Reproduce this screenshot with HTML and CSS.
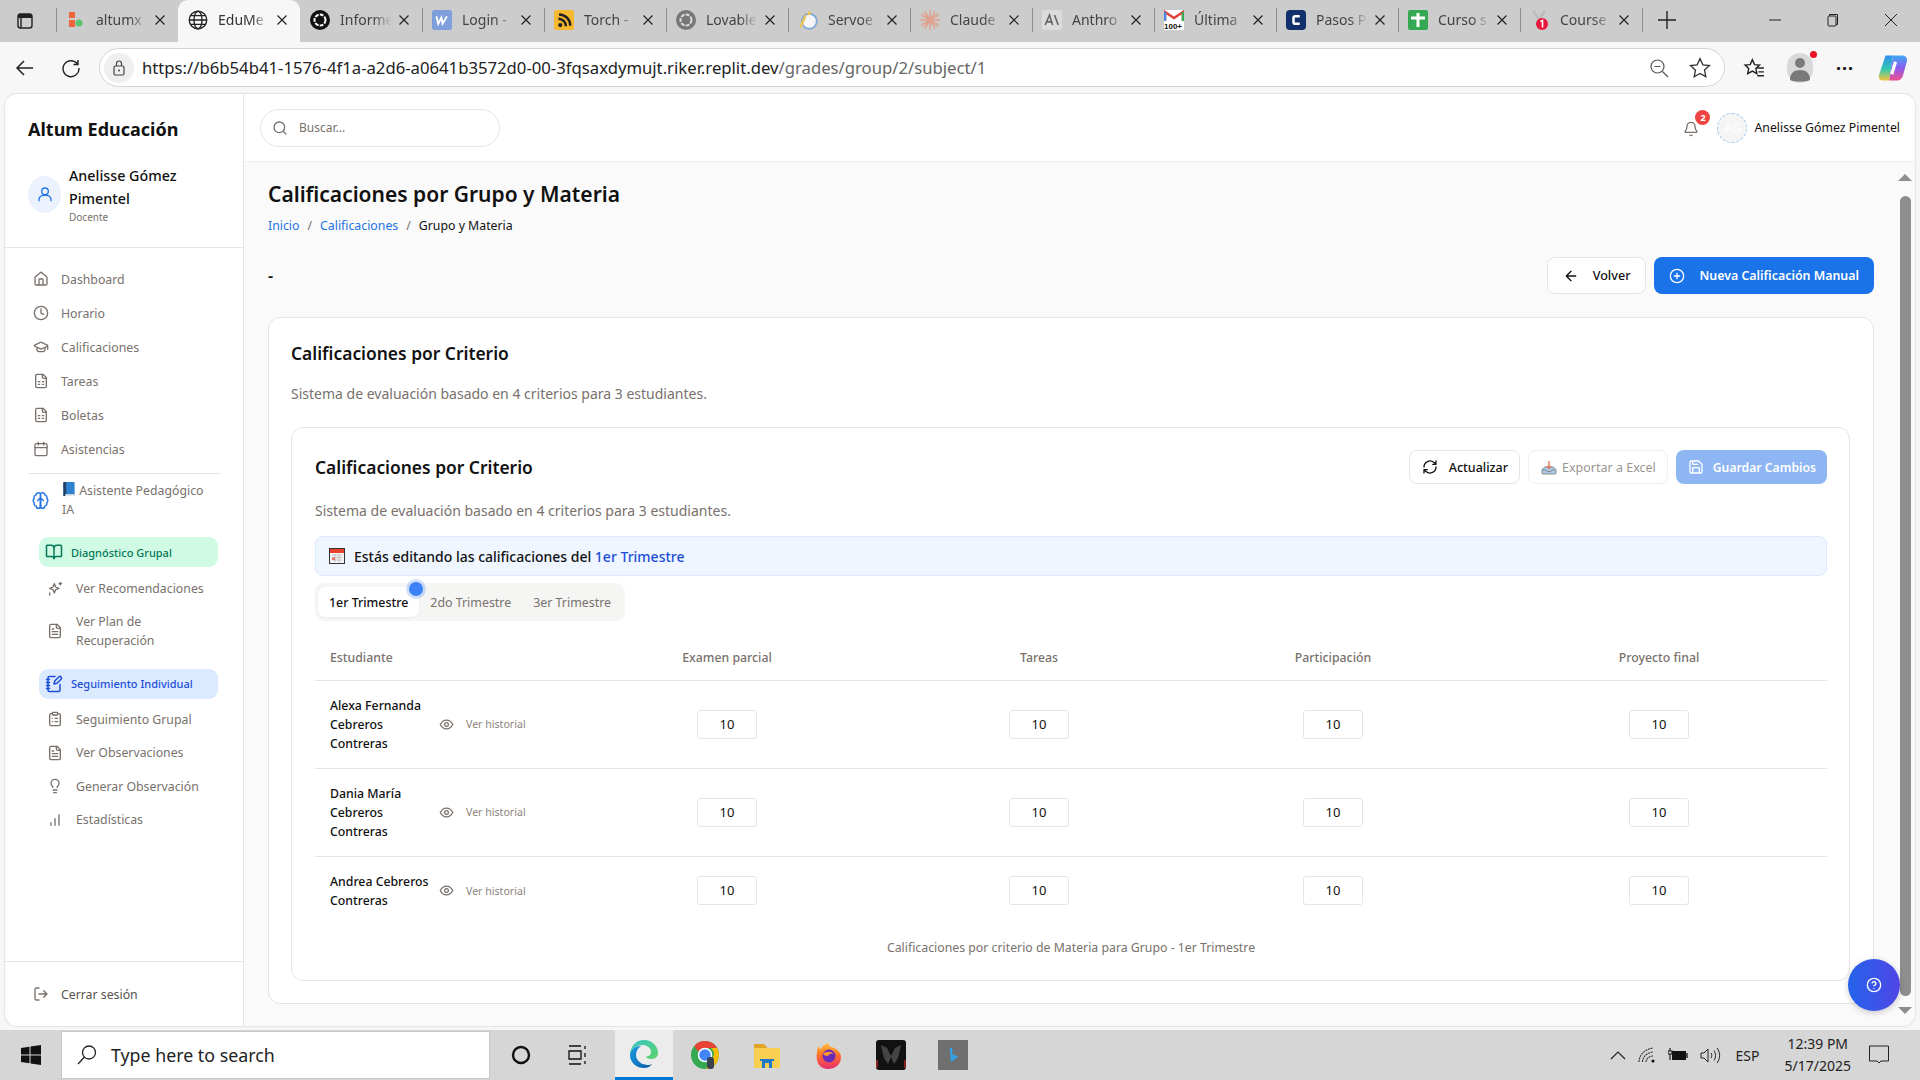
FILE: index.html
```html
<!DOCTYPE html>
<html lang="es">
<head>
    <meta charset="UTF-8">
    <title>Calificaciones por Grupo y Materia</title>
    <link rel="stylesheet" href="styles.css">
</head>
<body>
    <svg class="defs" width="0" height="0">
        <symbol id="i-close" viewBox="0 0 12 12"><path d="M1.5 1.5l9 9M10.5 1.5l-9 9" fill="none" stroke="currentColor" stroke-width="1.2"/></symbol>
        <symbol id="i-sheet" viewBox="0 0 24 24"><g fill="none" stroke="currentColor" stroke-width="2" stroke-linecap="round" stroke-linejoin="round"><path d="M15 2H6a2 2 0 0 0-2 2v16a2 2 0 0 0 2 2h12a2 2 0 0 0 2-2V7z"/><path d="M14 2v4a2 2 0 0 0 2 2h4"/><path d="M8 13h2M14 13h2M8 17h2M14 17h2"/></g></symbol>
        <symbol id="i-text" viewBox="0 0 24 24"><g fill="none" stroke="currentColor" stroke-width="2" stroke-linecap="round" stroke-linejoin="round"><path d="M15 2H6a2 2 0 0 0-2 2v16a2 2 0 0 0 2 2h12a2 2 0 0 0 2-2V7z"/><path d="M14 2v4a2 2 0 0 0 2 2h4"/><path d="M16 13H8M16 17H8M10 9H8"/></g></symbol>
        <symbol id="i-eye" viewBox="0 0 24 24"><g fill="none" stroke="currentColor" stroke-width="2" stroke-linecap="round" stroke-linejoin="round"><path d="M2 12s3.6-7 10-7 10 7 10 7-3.6 7-10 7-10-7-10-7z"/><circle cx="12" cy="12" r="3"/></g></symbol>
    </svg>

    <div class="tabstrip">
        <div class="tab-menu">
            <svg width="18" height="18" viewBox="0 0 18 18"><rect x="2" y="2" width="14" height="14" rx="2.5" fill="none" stroke="#222" stroke-width="1.4"/><rect x="2" y="2" width="14" height="4" fill="#222"/><path d="M5 6v10" stroke="#222" stroke-width="1.4"/></svg>
        </div>
        <div class="tab">
            <svg class="favicon" viewBox="0 0 20 20"><rect x="3" y="2" width="6" height="6" fill="#f0643c"/><rect x="3" y="10" width="6" height="7" fill="#f0643c"/><circle cx="13" cy="13" r="3.5" fill="#5cc46e"/></svg>
            <span class="tab-title">altumx</span>
            <svg class="tab-x"><use href="#i-close"/></svg>
        </div>
        <div class="tab active">
            <svg class="favicon" viewBox="0 0 16 16"><g fill="none" stroke="#222" stroke-width="1.1"><circle cx="8" cy="8" r="7"/><ellipse cx="8" cy="8" rx="3.2" ry="7"/><path d="M1 8h14M2 4.5h12M2 11.5h12"/></g></svg>
            <span class="tab-title">EduMe</span>
            <svg class="tab-x"><use href="#i-close"/></svg>
        </div>
        <div class="tab">
            <svg class="favicon" viewBox="0 0 16 16"><circle cx="8" cy="8" r="8" fill="#111"/><circle cx="8" cy="8" r="4.4" fill="none" stroke="#fff" stroke-width="1.6" stroke-dasharray="3 1"/></svg>
            <span class="tab-title">Informe</span>
            <svg class="tab-x"><use href="#i-close"/></svg>
        </div>
        <div class="tab">
            <svg class="favicon" viewBox="0 0 16 16"><rect width="16" height="16" rx="2" fill="#7f9fdc"/><path d="M3.5 5l1.5 6 2.5-5 1 5 3.5-6" fill="none" stroke="#fff" stroke-width="1.5"/></svg>
            <span class="tab-title">Login -</span>
            <svg class="tab-x"><use href="#i-close"/></svg>
        </div>
        <div class="tab">
            <svg class="favicon" viewBox="0 0 16 16"><rect width="16" height="16" rx="2" fill="#f5b82e"/><circle cx="5" cy="12" r="1.7" fill="#222"/><path d="M3.5 7a6 6 0 0 1 6 6M4 3.5a9 9 0 0 1 9 9" fill="none" stroke="#222" stroke-width="2"/></svg>
            <span class="tab-title">Torch -</span>
            <svg class="tab-x"><use href="#i-close"/></svg>
        </div>
        <div class="tab">
            <svg class="favicon" viewBox="0 0 16 16"><circle cx="8" cy="8" r="8" fill="#777"/><circle cx="8" cy="8" r="4.4" fill="none" stroke="#ddd" stroke-width="1.6" stroke-dasharray="3 1"/></svg>
            <span class="tab-title">Lovable</span>
            <svg class="tab-x"><use href="#i-close"/></svg>
        </div>
        <div class="tab">
            <svg class="favicon" viewBox="0 0 16 16"><circle cx="9" cy="9" r="6" fill="#f4f4f4" stroke="#7fa8d8" stroke-width="1.5"/><path d="M2 14L6 4" stroke="#e6c25a" stroke-width="2"/><circle cx="9" cy="2.5" r="1.5" fill="#e6c25a"/></svg>
            <span class="tab-title">Servoe</span>
            <svg class="tab-x"><use href="#i-close"/></svg>
        </div>
        <div class="tab">
            <svg class="favicon" viewBox="0 0 16 16"><path d="M8 0v16M0 8h16M2.3 2.3l11.4 11.4M13.7 2.3L2.3 13.7M4 .8l8 14.4M12 .8L4 15.2M.8 4l14.4 8M.8 12l14.4-8" stroke="#e0a18c" stroke-width="1.1"/></svg>
            <span class="tab-title">Claude</span>
            <svg class="tab-x"><use href="#i-close"/></svg>
        </div>
        <div class="tab">
            <svg class="favicon" viewBox="0 0 16 16"><rect width="16" height="16" rx="2" fill="#dcdcdc"/><path d="M2.5 12L6 4l2.5 8M4 9.5h3.5M10 4l3 8" fill="none" stroke="#666" stroke-width="1.3"/></svg>
            <span class="tab-title">Anthro</span>
            <svg class="tab-x"><use href="#i-close"/></svg>
        </div>
        <div class="tab">
            <svg class="favicon" viewBox="0 0 20 20"><rect width="20" height="20" fill="#fff"/><path d="M1 11V2l9 6 9-6v9" fill="none" stroke="#e0433a" stroke-width="2.5"/><path d="M1 2v9" stroke="#4a87e8" stroke-width="2.5"/><path d="M19 2v9" stroke="#35a853" stroke-width="2.5"/><text x="0" y="19" class="gmail-count">100+</text></svg>
            <span class="tab-title">Última</span>
            <svg class="tab-x"><use href="#i-close"/></svg>
        </div>
        <div class="tab">
            <svg class="favicon" viewBox="0 0 16 16"><rect width="16" height="16" rx="3" fill="#12306b"/><path d="M11 5H7.5A1.5 1.5 0 0 0 6 6.5v3A1.5 1.5 0 0 0 7.5 11H11" fill="none" stroke="#fff" stroke-width="2"/></svg>
            <span class="tab-title">Pasos P</span>
            <svg class="tab-x"><use href="#i-close"/></svg>
        </div>
        <div class="tab">
            <svg class="favicon" viewBox="0 0 20 20"><rect width="20" height="20" rx="2" fill="#34a853"/><path d="M10 3v14M3 8h14" stroke="#fff" stroke-width="3"/></svg>
            <span class="tab-title">Curso s</span>
            <svg class="tab-x"><use href="#i-close"/></svg>
        </div>
        <div class="tab">
            <svg class="favicon" viewBox="0 0 20 20"><path d="M3 1l8 11M15 1L8 11" stroke="#bbb" stroke-width="2.5"/><circle cx="12" cy="14" r="6" fill="#e8173c"/><path d="M10.5 11.5l2-1v7" fill="none" stroke="#fff" stroke-width="1.6"/></svg>
            <span class="tab-title">Course</span>
            <svg class="tab-x"><use href="#i-close"/></svg>
        </div>
        <div class="tab-new">
            <svg width="18" height="18" viewBox="0 0 18 18"><path d="M9 0v18M0 9h18" stroke="#222" stroke-width="1.4"/></svg>
        </div>
        <div class="win-controls">
            <span class="win-btn"><svg width="14" height="14" viewBox="0 0 14 14"><path d="M1 7h12" stroke="#222"/></svg></span>
            <span class="win-btn"><svg width="14" height="14" viewBox="0 0 14 14"><path d="M3.5 3V1.5h8v10H10" fill="none" stroke="#222"/><rect x="2" y="3" width="8" height="10" rx="1" fill="none" stroke="#222"/></svg></span>
            <span class="win-btn"><svg width="14" height="14" viewBox="0 0 14 14"><path d="M1 1l12 12M13 1L1 13" stroke="#222"/></svg></span>
        </div>
    </div>

    <div class="toolbar">
        <svg class="tool-icon" viewBox="0 0 20 20"><path d="M18 10H2.5M9 3l-7 7 7 7" fill="none" stroke="#222" stroke-width="1.5"/></svg>
        <svg class="tool-icon" viewBox="0 0 20 20"><path d="M16.5 6A8 8 0 1 0 18 10M17 2v4.5h-4.5" fill="none" stroke="#222" stroke-width="1.4"/></svg>
        <div class="omnibox">
            <span class="lock"><svg width="14" height="16" viewBox="0 0 14 16"><rect x="2" y="6" width="10" height="9" rx="1.5" fill="none" stroke="#444" stroke-width="1.2"/><path d="M4.5 6V3.5a2.5 2.5 0 0 1 5 0V6" fill="none" stroke="#444" stroke-width="1.2"/><circle cx="7" cy="10.5" r="1" fill="#444"/></svg></span>
            <span class="url"><b>https://b6b54b41-1576-4f1a-a2d6-a0641b3572d0-00-3fqsaxdymujt.riker.replit.dev</b>/grades/group/2/subject/1</span>
            <svg class="omni-icon" viewBox="0 0 20 20"><circle cx="8.5" cy="8.5" r="6.5" fill="none" stroke="#555" stroke-width="1.2"/><path d="M13.5 13.5L19 19M5.5 8.5h6" stroke="#555" stroke-width="1.2"/></svg>
            <svg class="omni-icon star" viewBox="0 0 20 20"><path d="M10 1.5l2.6 5.6 6 .7-4.5 4.1 1.2 6L10 15l-5.3 3 1.2-6L1.4 7.800l6-.7z" fill="none" stroke="#333" stroke-width="1.2"/></svg>
        </div>
        <svg class="tool-icon favs" viewBox="0 0 20 20"><path d="M8.5 2.5l2 4.4 4.5.5-3.3 3.1.9 4.7-4.1-2.3-4.2 2.3.9-4.7L1.900 7.400l4.600-.5zM13 10h6M14 13.5h5M13 17h6" fill="none" stroke="#222" stroke-width="1.3"/></svg>
        <div class="profile-pic">
            <svg width="26" height="30" viewBox="0 0 26 30"><rect width="26" height="30" rx="13" fill="#d9d9d9"/><circle cx="13" cy="10" r="5" fill="#7a7a7a"/><path d="M3 27c0-7 4-10 10-10s10 3 10 10c-3 2-17 2-20 0z" fill="#7a7a7a"/></svg>
            <i class="profile-dot"></i>
        </div>
        <span class="more">···</span>
        <svg class="copilot" viewBox="0 0 24 24"><defs><linearGradient id="cp1" x1="0" y1="0" x2="0" y2="1"><stop offset="0" stop-color="#2f8ff0"/><stop offset=".55" stop-color="#35c9b0"/><stop offset="1" stop-color="#f5c53a"/></linearGradient><linearGradient id="cp2" x1="0" y1="0" x2="0" y2="1"><stop offset="0" stop-color="#3fa7f5"/><stop offset=".5" stop-color="#8a5cf0"/><stop offset="1" stop-color="#ef4f8a"/></linearGradient></defs><path d="M6 2h6L9 22H4c-3 0-4-2-3-5z" fill="url(#cp1)"/><path d="M12 2h7c3 0 5 2 4 5l-3 11c-1 3-3 4-5 4H9z" fill="url(#cp2)"/><path d="M14 7l-3 10" stroke="#fff" stroke-width="2.5"/></svg>
    </div>

    <div class="window">
        <aside class="sidebar">
            <div class="brand">Altum Educación</div>
            <div class="user-box">
                <div class="user-avatar">
                    <svg width="16" height="16" viewBox="0 0 24 24"><g fill="none" stroke="#2474e5" stroke-width="2" stroke-linecap="round"><circle cx="12" cy="8" r="5"/><path d="M3 22v-2a7 7 0 0 1 7-6h4a7 7 0 0 1 7 6v2"/></g></svg>
                </div>
                <div>
                    <div class="user-name">Anelisse Gómez Pimentel</div>
                    <div class="user-role">Docente</div>
                </div>
            </div>

            <nav class="nav">
                <a class="nav-item"><svg class="nav-icon" viewBox="0 0 24 24"><g fill="none" stroke="currentColor" stroke-width="2" stroke-linejoin="round"><path d="M3 10a2 2 0 0 1 .7-1.5l7-6a2 2 0 0 1 2.6 0l7 6A2 2 0 0 1 21 10v9a2 2 0 0 1-2 2H5a2 2 0 0 1-2-2z"/><path d="M15 21v-8a1 1 0 0 0-1-1h-4a1 1 0 0 0-1 1v8"/></g></svg>Dashboard</a>
                <a class="nav-item"><svg class="nav-icon" viewBox="0 0 24 24"><g fill="none" stroke="currentColor" stroke-width="2" stroke-linecap="round"><circle cx="12" cy="12" r="10"/><path d="M12 6v6l4 2"/></g></svg>Horario</a>
                <a class="nav-item"><svg class="nav-icon" viewBox="0 0 24 24"><g fill="none" stroke="currentColor" stroke-width="2" stroke-linejoin="round"><path d="M21.4 10.9a1 1 0 0 0 0-1.8L12.8 5.2a2 2 0 0 0-1.7 0L2.6 9.100a1 1 0 0 0 0 1.800l8.600 3.900a2 2 0 0 0 1.700 0z"/><path d="M22 10v6M6 12.5V16a6 3 0 0 0 12 0v-3.500"/></g></svg>Calificaciones</a>
                <a class="nav-item"><svg class="nav-icon"><use href="#i-sheet"/></svg>Tareas</a>
                <a class="nav-item"><svg class="nav-icon"><use href="#i-sheet"/></svg>Boletas</a>
                <a class="nav-item"><svg class="nav-icon" viewBox="0 0 24 24"><g fill="none" stroke="currentColor" stroke-width="2" stroke-linecap="round"><rect x="3" y="4" width="18" height="18" rx="2"/><path d="M16 2v4M8 2v4M3 10h18"/></g></svg>Asistencias</a>
            </nav>

            <div class="ai-section">
                <div class="ai-head">
                    <svg class="ai-brain" viewBox="0 0 24 24"><g fill="none" stroke="#2474e5" stroke-width="2" stroke-linecap="round"><path d="M12 4a3 3 0 0 0-6 0 4 4 0 0 0-3 5 4 4 0 0 0 0 6 4 4 0 0 0 3 5 3 3 0 0 0 6 0z"/><path d="M12 4a3 3 0 0 1 6 0 4 4 0 0 1 3 5 4 4 0 0 1 0 6 4 4 0 0 1-3 5 3 3 0 0 1-6 0z"/><path d="M12 8v14M8 12l4-4 4 4"/></g></svg>
                    <span class="ai-title"><svg class="book-emoji" viewBox="0 0 14 16"><rect x="1" y="0" width="12" height="15" rx="1.5" fill="#2f82cf"/><rect x="1" y="0" width="3" height="15" fill="#1f3f63"/><rect x="3" y="13" width="10" height="2" fill="#e6e6e6"/></svg> Asistente Pedagógico IA</span>
                </div>

                <a class="pill pill-green"><svg class="pill-icon" viewBox="0 0 24 24"><g fill="none" stroke="currentColor" stroke-width="2" stroke-linejoin="round"><path d="M12 7v14"/><path d="M3 18a1 1 0 0 1-1-1V4a1 1 0 0 1 1-1h5a4 4 0 0 1 4 4 4 4 0 0 1 4-4h5a1 1 0 0 1 1 1v13a1 1 0 0 1-1 1h-6a3 3 0 0 0-3 3 3 3 0 0 0-3-3z"/></g></svg>Diagnóstico Grupal</a>
                <a class="sub-item"><svg class="nav-icon" viewBox="0 0 24 24"><g fill="none" stroke="currentColor" stroke-width="2" stroke-linejoin="round" stroke-linecap="round"><path d="M11 4l2 5 5 2-5 2-2 5-2-5-5-2 5-2z"/><path d="M20 2v4M22 4h-4M4 18v3"/></g></svg>Ver Recomendaciones</a>
                <a class="sub-item sub-tall"><svg class="nav-icon"><use href="#i-text"/></svg><span>Ver Plan de Recuperación</span></a>
                <a class="pill pill-blue"><svg class="pill-icon" viewBox="0 0 24 24"><g fill="none" stroke="currentColor" stroke-width="2" stroke-linecap="round" stroke-linejoin="round"><path d="M13.4 2H6a2 2 0 0 0-2 2v16a2 2 0 0 0 2 2h12a2 2 0 0 0 2-2v-7.4"/><path d="M2 6h4M2 10h4M2 14h4M2 18h4"/><path d="M21.4 5.6a2 2 0 0 0-3-3L13 8l-1 4 4-1z"/></g></svg>Seguimiento Individual</a>
                <a class="sub-item"><svg class="nav-icon" viewBox="0 0 24 24"><g fill="none" stroke="currentColor" stroke-width="2" stroke-linecap="round"><rect x="8" y="2" width="8" height="4" rx="1"/><path d="M16 4h2a2 2 0 0 1 2 2v14a2 2 0 0 1-2 2H6a2 2 0 0 1-2-2V6a2 2 0 0 1 2-2h2"/><path d="M12 11h4M12 16h4M8 11h.01M8 16h.01"/></g></svg>Seguimiento Grupal</a>
                <a class="sub-item"><svg class="nav-icon"><use href="#i-text"/></svg>Ver Observaciones</a>
                <a class="sub-item"><svg class="nav-icon" viewBox="0 0 24 24"><g fill="none" stroke="currentColor" stroke-width="2" stroke-linecap="round"><path d="M15 14c.2-1 .7-1.7 1.5-2.500A4.600 4.600 0 0 0 18 8 6 6 0 0 0 6 8c0 1 .2 2.200 1.500 3.500.7.700 1.300 1.500 1.500 2.500"/><path d="M9 18h6M10 22h4"/></g></svg>Generar Observación</a>
                <a class="sub-item"><svg class="nav-icon" viewBox="0 0 24 24"><path d="M6 20v-4M12 20V10M18 20V4" fill="none" stroke="currentColor" stroke-width="2" stroke-linecap="round"/></svg>Estadísticas</a>
            </div>

            <a class="logout"><svg class="nav-icon" viewBox="0 0 24 24"><g fill="none" stroke="currentColor" stroke-width="2" stroke-linecap="round" stroke-linejoin="round"><path d="M9 21H5a2 2 0 0 1-2-2V5a2 2 0 0 1 2-2h4"/><path d="M16 17l5-5-5-5M21 12H9"/></g></svg>Cerrar sesión</a>
        </aside>

        <div class="main">
            <header class="topbar">
                <div class="search">
                    <svg width="16" height="16" viewBox="0 0 24 24"><g fill="none" stroke="#78716c" stroke-width="2" stroke-linecap="round"><circle cx="11" cy="11" r="8"/><path d="M21 21l-4.3-4.3"/></g></svg>
                    <span>Buscar...</span>
                </div>
                <div class="top-right">
                    <div class="bell">
                        <svg width="16" height="16" viewBox="0 0 24 24"><g fill="none" stroke="#78716c" stroke-width="2" stroke-linecap="round" stroke-linejoin="round"><path d="M10.3 21a2 2 0 0 0 3.4 0"/><path d="M3.3 15.3A1 1 0 0 0 4 17h16a1 1 0 0 0 .7-1.700C19.400 14 18 12.500 18 8A6 6 0 0 0 6 8c0 4.500-1.400 6-2.700 7.300"/></g></svg>
                        <span class="badge">2</span>
                    </div>
                    <div class="top-avatar">AG</div>
                    <span class="top-name">Anelisse Gómez Pimentel</span>
                </div>
            </header>

            <div class="scroll-area">
                <div class="content">
                    <h1>Calificaciones por Grupo y Materia</h1>
                    <div class="crumbs"><a>Inicio</a><i>/</i><a>Calificaciones</a><i>/</i><span>Grupo y Materia</span></div>

                    <div class="page-actions">
                        <span class="dash">-</span>
                        <div class="btn-group">
                            <button class="btn btn-light btn-volver"><svg width="16" height="16" viewBox="0 0 24 24"><path d="M19 12H5M12 19l-7-7 7-7" fill="none" stroke="#111" stroke-width="2" stroke-linecap="round" stroke-linejoin="round"/></svg>Volver</button>
                            <button class="btn btn-primary"><svg width="16" height="16" viewBox="0 0 24 24"><g fill="none" stroke="#fff" stroke-width="2" stroke-linecap="round"><circle cx="12" cy="12" r="10"/><path d="M8 12h8M12 8v8"/></g></svg>Nueva Calificación Manual</button>
                        </div>
                    </div>

                    <section class="card outer-card">
                        <h2>Calificaciones por Criterio</h2>
                        <p class="muted outer-sub">Sistema de evaluación basado en 4 criterios para 3 estudiantes.</p>

                        <section class="card inner-card">
                            <div class="inner-head">
                                <h2>Calificaciones por Criterio</h2>
                                <div class="inner-actions">
                                    <button class="btn-sm btn-refresh"><svg width="16" height="16" viewBox="0 0 24 24"><g fill="none" stroke="#111" stroke-width="2" stroke-linecap="round" stroke-linejoin="round"><path d="M3 12a9 9 0 0 1 15-6.700L21 8M21 3v5h-5M21 12a9 9 0 0 1-15 6.700L3 16M8 16H3v5"/></g></svg>Actualizar</button>
                                    <button class="btn-sm btn-export"><svg width="16" height="16" viewBox="0 0 16 16"><path d="M1 10.5L4 8h8l3 2.5V14a1 1 0 0 1-1 1H2a1 1 0 0 1-1-1z" fill="#a9cbe8" stroke="#8b8b8b"/><path d="M1.5 11h3.5l1 1.5h4l1-1.5h3.5" fill="none" stroke="#8b8b8b"/><path d="M8 2v7M6 7l2 2.5L10 7" fill="none" stroke="#e27a62" stroke-width="1.4"/></svg>Exportar a Excel</button>
                                    <button class="btn-sm btn-save"><svg width="16" height="16" viewBox="0 0 24 24"><g fill="none" stroke="#fff" stroke-width="2" stroke-linejoin="round"><path d="M15.2 3a2 2 0 0 1 1.4.6l3.8 3.800a2 2 0 0 1 .6 1.400V19a2 2 0 0 1-2 2H5a2 2 0 0 1-2-2V5a2 2 0 0 1 2-2z"/><path d="M17 21v-7a1 1 0 0 0-1-1H8a1 1 0 0 0-1 1v7M7 3v4a1 1 0 0 0 1 1h7"/></g></svg>Guardar Cambios</button>
                                </div>
                            </div>
                            <p class="muted inner-sub">Sistema de evaluación basado en 4 criterios para 3 estudiantes.</p>

                            <div class="notice">
                                <svg width="16" height="16" viewBox="0 0 16 16"><rect x=".5" y=".5" width="15" height="15" fill="#f4f4f4" stroke="#333"/><rect x="1" y="1" width="14" height="4" fill="#e8412c"/><path d="M3 7h10M3 9.5h10M3 12h10M6 6v8M10 6v8" stroke="#bbb" stroke-width=".8"/><rect x="3" y="9.5" width="3" height="2.5" fill="#e8776a"/></svg>
                                <span>Estás editando las calificaciones del <em>1er Trimestre</em></span>
                            </div>

                            <div class="term-tabs">
                                <span class="term active">1er Trimestre<i class="term-dot"></i></span>
                                <span class="term">2do Trimestre</span>
                                <span class="term">3er Trimestre</span>
                            </div>

                            <table class="grades">
                                <colgroup><col class="c-student"><col class="c-exam"><col class="c-tasks"><col class="c-part"><col class="c-final"></colgroup>
                                <thead>
                                    <tr><th class="th-student">Estudiante</th><th>Examen parcial</th><th>Tareas</th><th>Participación</th><th>Proyecto final</th></tr>
                                </thead>
                                <tbody>
                                    <tr>
                                        <td><div class="student"><span class="student-name">Alexa Fernanda Cebreros Contreras</span><span class="history"><svg class="eye"><use href="#i-eye"/></svg>Ver historial</span></div></td>
                                        <td><span class="score">10</span></td><td><span class="score">10</span></td><td><span class="score">10</span></td><td><span class="score">10</span></td>
                                    </tr>
                                    <tr>
                                        <td><div class="student"><span class="student-name">Dania María Cebreros Contreras</span><span class="history"><svg class="eye"><use href="#i-eye"/></svg>Ver historial</span></div></td>
                                        <td><span class="score">10</span></td><td><span class="score">10</span></td><td><span class="score">10</span></td><td><span class="score">10</span></td>
                                    </tr>
                                    <tr>
                                        <td><div class="student"><span class="student-name">Andrea Cebreros Contreras</span><span class="history"><svg class="eye"><use href="#i-eye"/></svg>Ver historial</span></div></td>
                                        <td><span class="score">10</span></td><td><span class="score">10</span></td><td><span class="score">10</span></td><td><span class="score">10</span></td>
                                    </tr>
                                </tbody>
                            </table>
                            <p class="table-note">Calificaciones por criterio de Materia para Grupo - 1er Trimestre</p>
                        </section>
                    </section>
                </div>
                <div class="scrollbar">
                    <i class="arrow-up"></i>
                    <i class="thumb"></i>
                    <i class="arrow-down"></i>
                </div>
                <button class="fab"><svg width="16" height="16" viewBox="0 0 24 24"><g fill="none" stroke="#fff" stroke-width="2" stroke-linecap="round"><circle cx="12" cy="12" r="10"/><path d="M9.1 9a3 3 0 0 1 5.8 1c0 2-3 3-3 3M12 17h.01"/></g></svg></button>
            </div>
        </div>
    </div>

    <div class="taskbar">
        <span class="start"><svg width="20" height="20" viewBox="0 0 20 20"><path d="M0 3l8.5-1.200v7.700H0zM9.500 1.600L20 0v9.500H9.500zM0 10.500h8.500v7.700L0 17zM9.500 10.500H20V20L9.500 18.400z" fill="#111"/></svg></span>
        <div class="task-search">
            <svg width="20" height="20" viewBox="0 0 20 20"><g fill="none" stroke="#222" stroke-width="1.3"><circle cx="12" cy="7.5" r="6.5"/><path d="M7.5 12L1 19"/></g></svg>
            <span>Type here to search</span>
        </div>
        <span class="task-btn"><svg width="20" height="20" viewBox="0 0 20 20"><circle cx="10" cy="10" r="8" fill="none" stroke="#111" stroke-width="2.4"/></svg></span>
        <span class="task-btn task-view"><svg width="20" height="20" viewBox="0 0 20 20"><path d="M1 1h12M1 19h12M1 6h12v8H1zM17 1v3M17 8v4M17 16v3" fill="none" stroke="#111" stroke-width="1.3"/></svg></span>
        <span class="task-btn edge-tile">
            <svg width="30" height="30" viewBox="0 0 30 30"><defs><linearGradient id="eg1" x1="0" y1="0" x2="1" y2="1"><stop offset="0" stop-color="#36c4c4"/><stop offset="1" stop-color="#5fd36a"/></linearGradient><linearGradient id="eg2" x1="0" y1="0" x2="1" y2="1"><stop offset="0" stop-color="#1b9de2"/><stop offset="1" stop-color="#0c5aa8"/></linearGradient></defs><path d="M15 1c8 0 14 6 14 13 0 4-3 6-7 6-3 0-5-1-5-2.5 3 0 5-2 5-4.500 0-4-4-7-8-7-5 0-11 3-13 9C2 7 7 1 15 1z" fill="url(#eg1)"/><path d="M1 15c1-5 6-8 11-8-3 2-5 5-5 9 0 6 6 10 12 10 2 0 3-.5 4-1-2 3-5 4-8 4C7 29 .5 23 1 15z" fill="url(#eg2)"/></svg>
        </span>
        <span class="task-btn"><svg width="30" height="30" viewBox="0 0 30 30"><circle cx="15" cy="15" r="14" fill="#34a853"/><path d="M15 1a14 14 0 0 1 12.1 7H15a7 7 0 0 0-6.4 4L4.2 5.900A14 14 0 0 1 15 1z" fill="#ea4335"/><path d="M27.1 8A14 14 0 0 1 16 29l6-10.500A7 7 0 0 0 21 8z" fill="#fbbc05"/><circle cx="15" cy="15" r="6.5" fill="#4285f4" stroke="#fff" stroke-width="1.5"/><rect x="17" y="17" width="7" height="12" rx="3" fill="#39424e"/></svg></span>
        <span class="task-btn"><svg width="30" height="30" viewBox="0 0 30 30"><path d="M2 4h10l3 3v6H2z" fill="#e0a528"/><rect x="2" y="8" width="26" height="20" fill="#f9cf52"/><path d="M10 28v-9h10v9h-3v-5h-4v5z" fill="#1d79c8"/><path d="M8 19h14v2H8z" fill="#1d79c8"/></svg></span>
        <span class="task-btn"><svg width="30" height="30" viewBox="0 0 30 30"><defs><linearGradient id="ff" x1="0" y1="0" x2="0" y2="1"><stop offset="0" stop-color="#ffc12e"/><stop offset=".5" stop-color="#ff6a2e"/><stop offset="1" stop-color="#e62e6f"/></linearGradient></defs><path d="M3 12c0-3 1-5 2-6 0 2 1 3 2 3 1-3 4-5 8-6-1 2 0 3 2 4 5 1 10 5 10 10 0 8-6 12-13 12S1 24 3 12z" fill="url(#ff)"/><circle cx="15" cy="16" r="6.5" fill="#6a2bb8"/><path d="M9 14c3-3 8-3 11 0-3-1-5 0-6 2-2 0-4-1-5-2z" fill="#ff9a2e"/></svg></span>
        <span class="task-btn"><svg width="30" height="30" viewBox="0 0 30 30"><rect width="30" height="30" rx="3" fill="#111"/><path d="M5 5l6 3 4 8 4-8 6-3-3 13-4 6-3-7-3 7-4-6z" fill="#444"/><path d="M1 20v8M29 20v8" stroke="#b02525" stroke-width="1.5"/></svg></span>
        <span class="task-btn"><svg width="30" height="30" viewBox="0 0 30 30"><rect width="30" height="30" fill="#6f6f6f"/><path d="M13 8l1 12 4-3-3-1.5" fill="none" stroke="#2ea4f0" stroke-width="2.2"/></svg></span>

        <div class="tray">
            <svg class="tray-chev" width="16" height="10" viewBox="0 0 16 10"><path d="M1 9l7-7 7 7" fill="none" stroke="#222" stroke-width="1.2"/></svg>
            <svg width="18" height="16" viewBox="0 0 18 16"><g fill="none" stroke="#333" stroke-width="1.1" stroke-dasharray="2 .7"><path d="M1 15C1 8 7 2 15 1M4.500 15c0-5 4-9 10.500-10M8 15c0-3 3-6 7-6"/></g><circle cx="15" cy="14" r="1.600" fill="#111"/></svg>
            <svg width="20" height="14" viewBox="0 0 20 14"><rect x="4" y="3" width="14" height="9" fill="#111"/><path d="M19 5v5" stroke="#111" stroke-width="1.3"/><path d="M2 0v3M0 3h4v3H0zM2 6v6" fill="none" stroke="#111" stroke-width="1.1"/></svg>
            <svg width="21" height="17" viewBox="0 0 21 17"><g fill="none" stroke="#222" stroke-width="1"><path d="M1 6h3l4-4v13l-4-4H1zM11 6c1 1.500 1 3.500 0 5M14 3.500c2 3 2 7 0 10M17 1c3.500 4.500 3.500 10.500 0 15"/></g></svg>
            <span class="tray-lang">ESP</span>
            <div class="clock"><div>12:39 PM</div><div>5/17/2025</div></div>
            <svg class="tray-notif" width="20" height="20" viewBox="0 0 20 20"><path d="M.5 1h19v15h-7.500L10 18l-2-2H.5z" fill="none" stroke="#222"/></svg>
        </div>
    </div>
</body>
</html>
```

FILE: styles.css
```css
* {
    box-sizing: border-box;
}
html, body {
    margin: 0;
    height: 100%;
}
body {
    width: 1920px;
    height: 1080px;
    overflow: hidden;
    display: flex;
    flex-direction: column;
    background: #f7f7f7;
    font-family: "Noto Sans", sans-serif;
    color: #111;
}
.defs {
    position: absolute;
}
h1, h2, p {
    margin: 0;
}
button {
    font-family: inherit;
    cursor: pointer;
}

/* browser tabs */
.tabstrip {
    height: 42px;
    flex: none;
    display: flex;
    align-items: center;
    background: #cccccc;
}
.tab-menu {
    width: 56px;
    padding-left: 16px;
    display: flex;
}
.tab {
    position: relative;
    width: 122px;
    height: 42px;
    display: flex;
    align-items: center;
    padding: 0 0 3px 10px;
    font-size: 14px;
    color: #444;
}
.tab::before {
    content: "";
    position: absolute;
    left: 0;
    top: 8px;
    height: 24px;
    width: 1px;
    background: #8c8c8c;
}
.tab.active {
    background: #f7f7f7;
    border-radius: 10px 10px 0 0;
    color: #333;
}
.tab.active::before, .tab.active + .tab::before {
    display: none;
}
.favicon {
    width: 20px;
    height: 20px;
    flex: none;
}
.gmail-count {
    font-size: 8px;
    font-family: "Liberation Sans", sans-serif;
    font-weight: bold;
    fill: #111;
}
.tab-title {
    width: 52px;
    margin-left: 10px;
    white-space: nowrap;
    overflow: hidden;
    -webkit-mask-image: linear-gradient(to right, #000 65%, transparent);
    mask-image: linear-gradient(to right, #000 65%, transparent);
}
.tab-x {
    width: 12px;
    height: 12px;
    margin-left: 6px;
    color: #222;
}
.tab-new {
    position: relative;
    width: 44px;
    height: 42px;
    display: flex;
    align-items: center;
    padding: 0 0 3px 16px;
}
.tab-new::before {
    content: "";
    position: absolute;
    left: 0;
    top: 8px;
    height: 24px;
    width: 1px;
    background: #8c8c8c;
}
.win-controls {
    margin-left: auto;
    display: flex;
    padding-bottom: 3px;
}
.win-btn {
    width: 58px;
    display: flex;
    justify-content: center;
}

/* browser toolbar */
.toolbar {
    height: 52px;
    flex: none;
    display: flex;
    align-items: center;
    padding: 0 0 1px 15px;
    background: #f7f7f7;
}
.tool-icon {
    width: 20px;
    height: 20px;
    margin-right: 26px;
}
.tool-icon + .omnibox {
    margin-left: -8px;
}
.omnibox {
    width: 1626px;
    height: 39px;
    display: flex;
    align-items: center;
    padding: 0 13px 0 4px;
    background: #fff;
    border: 1px solid #d4d4d4;
    border-radius: 20px;
    font-size: 16.7px;
}
.lock {
    width: 30px;
    height: 30px;
    display: flex;
    align-items: center;
    justify-content: center;
    background: #efefef;
    border-radius: 50%;
}
.url {
    flex: 1;
    margin-left: 8px;
    color: #666;
    white-space: nowrap;
}
.url b {
    font-weight: normal;
    color: #222;
}
.omni-icon {
    width: 20px;
    height: 20px;
}
.omni-icon.star {
    margin-left: 20px;
    width: 22px;
    height: 22px;
}
.tool-icon.favs {
    margin: 0 0 0 18px;
    width: 22px;
    height: 22px;
}
.profile-pic {
    position: relative;
    width: 26px;
    height: 30px;
    margin-left: 22px;
}
.profile-dot {
    position: absolute;
    top: -2px;
    right: -4px;
    width: 7px;
    height: 7px;
    background: #e81123;
    border-radius: 50%;
}
.more {
    margin-left: 23px;
    font-size: 18px;
    font-weight: bold;
    letter-spacing: 1px;
}
.copilot {
    width: 30px;
    height: 30px;
    margin-left: 24px;
}

/* app window */
.window {
    height: 932px;
    flex: none;
    margin: 0 5px 4px 5px;
    display: flex;
    background: #fafafa;
    border-radius: 12px;
    overflow: hidden;
    box-shadow: 0 0 2px rgba(0,0,0,0.25);
}

/* sidebar */
.sidebar {
    width: 239px;
    flex: none;
    display: flex;
    flex-direction: column;
    background: #fff;
    border-right: 1px solid #e7e5e4;
}
.brand {
    padding: 22px 0 0 23px;
    font-size: 18px;
    line-height: 26px;
    font-weight: 700;
}
.user-box {
    height: 93px;
    margin-top: 13px;
    padding: 0 10px 14px 23px;
    display: flex;
    align-items: center;
    gap: 8px;
    border-bottom: 1px solid #e7e5e4;
}
.user-avatar {
    width: 33px;
    height: 37px;
    flex: none;
    display: flex;
    align-items: center;
    justify-content: center;
    background: #ebf2fd;
    border-radius: 50%;
}
.user-name {
    font-size: 14.3px;
    line-height: 23px;
    font-weight: 500;
}
.user-role {
    font-size: 10px;
    line-height: 14px;
    color: #78716c;
}
.nav {
    margin: 14px 22px 0 23px;
    padding-bottom: 7px;
    border-bottom: 1px solid #e7e5e4;
}
.nav-item {
    height: 34px;
    display: flex;
    align-items: center;
    gap: 12px;
    padding-left: 5px;
    font-size: 12.3px;
    color: #78716c;
}
.nav-icon {
    width: 16px;
    height: 16px;
    flex: none;
    color: #78716c;
}
.ai-section {
    padding: 7px 25px 0 34px;
}
.ai-head {
    display: flex;
    align-items: center;
    margin-left: -7px;
    gap: 13px;
    font-size: 12.3px;
    line-height: 19px;
    color: #78716c;
}
.ai-title {
    width: 152px;
}
.ai-brain {
    width: 17px;
    height: 17px;
    flex: none;
}
.book-emoji {
    width: 14px;
    height: 15px;
    vertical-align: -2px;
}
.pill {
    height: 30px;
    display: flex;
    align-items: center;
    gap: 8px;
    padding-left: 6px;
    border-radius: 9px;
    font-size: 11px;
    font-weight: 500;
}
.pill-icon {
    width: 18px;
    height: 18px;
    flex: none;
}
.pill-green {
    margin: 18px 0 5px;
    background: #d1fae5;
    color: #047857;
}
.pill-blue {
    margin: 13px 0 4px;
    background: #dbeafe;
    color: #1d4ed8;
}
.sub-item {
    height: 33.5px;
    display: flex;
    align-items: center;
    gap: 13px;
    padding-left: 8px;
    font-size: 12.3px;
    line-height: 19px;
    color: #78716c;
}
.sub-tall {
    height: 50px;
}
.logout {
    margin-top: auto;
    height: 65px;
    display: flex;
    align-items: center;
    gap: 12px;
    padding-left: 28px;
    border-top: 1px solid #e7e5e4;
    font-size: 12.3px;
    color: #57534e;
}

/* main */
.main {
    flex: 1;
    display: flex;
    flex-direction: column;
    min-width: 0;
}
.topbar {
    height: 68px;
    flex: none;
    display: flex;
    align-items: center;
    justify-content: space-between;
    padding: 0 15px 0 16px;
    background: #fff;
    border-bottom: 1px solid #eeeeee;
}
.search {
    width: 240px;
    height: 38px;
    display: flex;
    align-items: center;
    gap: 11px;
    padding-left: 11px;
    background: #fff;
    border: 1px solid #e7e5e4;
    border-radius: 19px;
    font-size: 12px;
    color: #78716c;
}
.top-right {
    display: flex;
    align-items: center;
}
.bell {
    position: relative;
    width: 16px;
    height: 16px;
    margin-right: 18px;
}
.badge {
    position: absolute;
    top: -10px;
    left: 12px;
    width: 15px;
    height: 15px;
    background: #ef4444;
    border-radius: 50%;
    color: #fff;
    font-size: 9px;
    font-weight: 700;
    line-height: 15px;
    text-align: center;
}
.top-avatar {
    width: 30px;
    height: 30px;
    background: #f5f5f4;
    border: 1px dashed #93c5fd;
    border-radius: 50%;
    color: #fff;
    font-size: 13px;
    line-height: 28px;
    text-align: center;
}
.top-name {
    margin-left: 7px;
    font-size: 12.3px;
}
.scroll-area {
    position: relative;
    flex: 1;
    display: flex;
    min-height: 0;
}
.content {
    width: 1630px;
    flex: none;
    padding: 17px 0 0 24px;
}
h1 {
    font-size: 21px;
    line-height: 30px;
    font-weight: 600;
}
.crumbs {
    margin-top: 8px;
    font-size: 12.3px;
    line-height: 18px;
    display: flex;
}
.crumbs a {
    color: #2474e5;
}
.crumbs i {
    font-style: normal;
    margin: 0 8px;
    color: #78716c;
}
.page-actions {
    height: 37px;
    margin-top: 22px;
    display: flex;
    align-items: center;
    justify-content: space-between;
}
.dash {
    font-size: 16px;
    font-weight: 600;
}
.btn-group {
    display: flex;
    gap: 8px;
}
.btn {
    height: 37px;
    display: flex;
    align-items: center;
    gap: 14px;
    border-radius: 8px;
    font-size: 12.6px;
    font-weight: 500;
}
.btn-light {
    padding: 0 15px;
    background: #fff;
    border: 1px solid #e7e5e4;
    color: #111;
}
.btn-primary {
    padding: 0 15px;
    background: #1a73e8;
    border: none;
    color: #fff;
    font-size: 12.4px;
    font-weight: 600;
}
.card {
    background: #fff;
    border: 1px solid #e7e5e4;
    border-radius: 12px;
}
.outer-card {
    margin-top: 23px;
    padding: 22px 23px 22px 22px;
}
h2 {
    font-size: 17.4px;
    line-height: 26px;
    font-weight: 600;
}
.muted {
    font-size: 14px;
    line-height: 20px;
    color: #78716c;
}
.outer-sub {
    margin-top: 18px;
}
.inner-card {
    margin-top: 23px;
    padding: 22px 22px 23px 23px;
}
.inner-head {
    display: flex;
    align-items: center;
    justify-content: space-between;
    height: 34px;
}
.inner-actions {
    display: flex;
    gap: 8px;
}
.btn-sm {
    height: 34px;
    display: flex;
    align-items: center;
    gap: 11px;
    padding: 0 11px 0 12px;
    border-radius: 8px;
    font-size: 12.5px;
    font-weight: 500;
}
.btn-refresh {
    background: #fff;
    border: 1px solid #e7e5e4;
    color: #111;
}
.btn-export {
    padding: 0 11px 0 12px;
    gap: 5px;
    background: #fff;
    border: 1px solid #f0efee;
    color: #9a9692;
    font-weight: 400;
}
.btn-save {
    gap: 9px;
    background: #8db6f2;
    border: none;
    color: #fff;
    font-size: 12.2px;
    font-weight: 600;
}
.inner-sub {
    margin-top: 17px;
}
.notice {
    height: 40px;
    margin-top: 15px;
    display: flex;
    align-items: center;
    gap: 9px;
    padding-left: 13px;
    background: #eff6ff;
    border: 1px solid #dbeafe;
    border-radius: 8px;
    font-size: 14px;
    font-weight: 500;
}
.notice em {
    font-style: normal;
    color: #1d4ed8;
}
.term-tabs {
    width: 310px;
    height: 38px;
    margin-top: 7px;
    padding: 4px 3px;
    display: flex;
    background: #f5f5f4;
    border-radius: 9px;
    font-size: 12.4px;
    color: #78716c;
}
.term {
    position: relative;
    padding: 0 11px;
    line-height: 31px;
    white-space: nowrap;
}
.term.active {
    background: #fff;
    border-radius: 7px;
    color: #111;
    font-weight: 500;
    box-shadow: 0 1px 2px rgba(0,0,0,0.05);
}
.term-dot {
    position: absolute;
    top: -5px;
    right: -4px;
    width: 14px;
    height: 14px;
    background: #3b82f6;
    border-radius: 50%;
    box-shadow: 0 0 0 3px rgba(59,130,246,0.25);
}
.grades {
    width: 1512px;
    margin-top: 15px;
    table-layout: fixed;
    border-collapse: collapse;
    font-size: 12.3px;
}
.c-student { width: 236px; }
.c-exam { width: 352px; }
.c-tasks { width: 272px; }
.c-part { width: 316px; }
.c-final { width: 336px; }
.grades th {
    height: 44px;
    font-weight: 500;
    color: #78716c;
    text-align: center;
    border-bottom: 1px solid #e7e5e4;
}
.grades th.th-student {
    text-align: left;
    padding-left: 15px;
}
.grades td {
    padding: 15px 0;
    text-align: center;
    border-bottom: 1px solid #e7e5e4;
}
.grades tr:last-child td {
    border-bottom: none;
}
.student {
    display: flex;
    align-items: center;
    padding-left: 15px;
    text-align: left;
}
.student-name {
    width: 105px;
    flex: none;
    line-height: 19px;
    font-weight: 500;
}
.history {
    display: flex;
    align-items: center;
    gap: 12px;
    margin-left: 4px;
    font-size: 10.6px;
    color: #8a8580;
    white-space: nowrap;
}
.eye {
    width: 15px;
    height: 15px;
    color: #78716c;
}
.score {
    display: inline-block;
    width: 60px;
    height: 29px;
    line-height: 27px;
    background: #fff;
    border: 1px solid #e7e5e4;
    border-radius: 3px;
    font-size: 13px;
}
.table-note {
    margin-top: 14px;
    font-size: 12.3px;
    line-height: 18px;
    color: #78716c;
    text-align: center;
}

/* fake scrollbar and help button */
.scrollbar {
    position: absolute;
    right: 0;
    top: 0;
    bottom: 0;
    width: 20px;
    display: flex;
    flex-direction: column;
    align-items: center;
    background: #fafafa;
}
.arrow-up {
    margin-top: 12px;
    border-left: 7px solid transparent;
    border-right: 7px solid transparent;
    border-bottom: 7px solid #8e8e8e;
}
.thumb {
    width: 11px;
    height: 800px;
    margin-top: 15px;
    background: #8e8e8e;
    border-radius: 6px;
}
.arrow-down {
    margin-top: 11px;
    border-left: 7px solid transparent;
    border-right: 7px solid transparent;
    border-top: 7px solid #8e8e8e;
}
.fab {
    position: absolute;
    right: 15px;
    bottom: 15px;
    width: 52px;
    height: 52px;
    display: flex;
    align-items: center;
    justify-content: center;
    background: linear-gradient(to right, #2563eb, #4f46e5);
    border: none;
    border-radius: 50%;
    box-shadow: 0 2px 6px rgba(0,0,0,0.2);
}

/* windows taskbar */
.taskbar {
    height: 50px;
    flex: none;
    display: flex;
    align-items: center;
    background: #d6d6d6;
}
.start {
    width: 61px;
    display: flex;
    justify-content: center;
}
.task-search {
    width: 429px;
    height: 48px;
    display: flex;
    align-items: center;
    gap: 14px;
    padding-left: 15px;
    background: #fff;
    border: 1px solid #c8c8c8;
    font-size: 17.8px;
    color: #222;
}
.task-btn {
    width: 62px;
    height: 50px;
    display: flex;
    align-items: center;
    justify-content: center;
}
.task-btn.task-view {
    width: 52px;
}
.task-btn.edge-tile {
    width: 58px;
    margin: 0 1px 0 11px;
    background: #ececec;
    border-bottom: 3px solid #0078d4;
}
.tray {
    margin-left: auto;
    display: flex;
    align-items: center;
    gap: 12px;
    padding-right: 31px;
    font-size: 14px;
    color: #222;
}
.tray-lang {
    margin-left: 3px;
}
.clock {
    margin-left: 13px;
    text-align: center;
    line-height: 22px;
}
.tray-notif {
    margin-left: 6px;
}
```
